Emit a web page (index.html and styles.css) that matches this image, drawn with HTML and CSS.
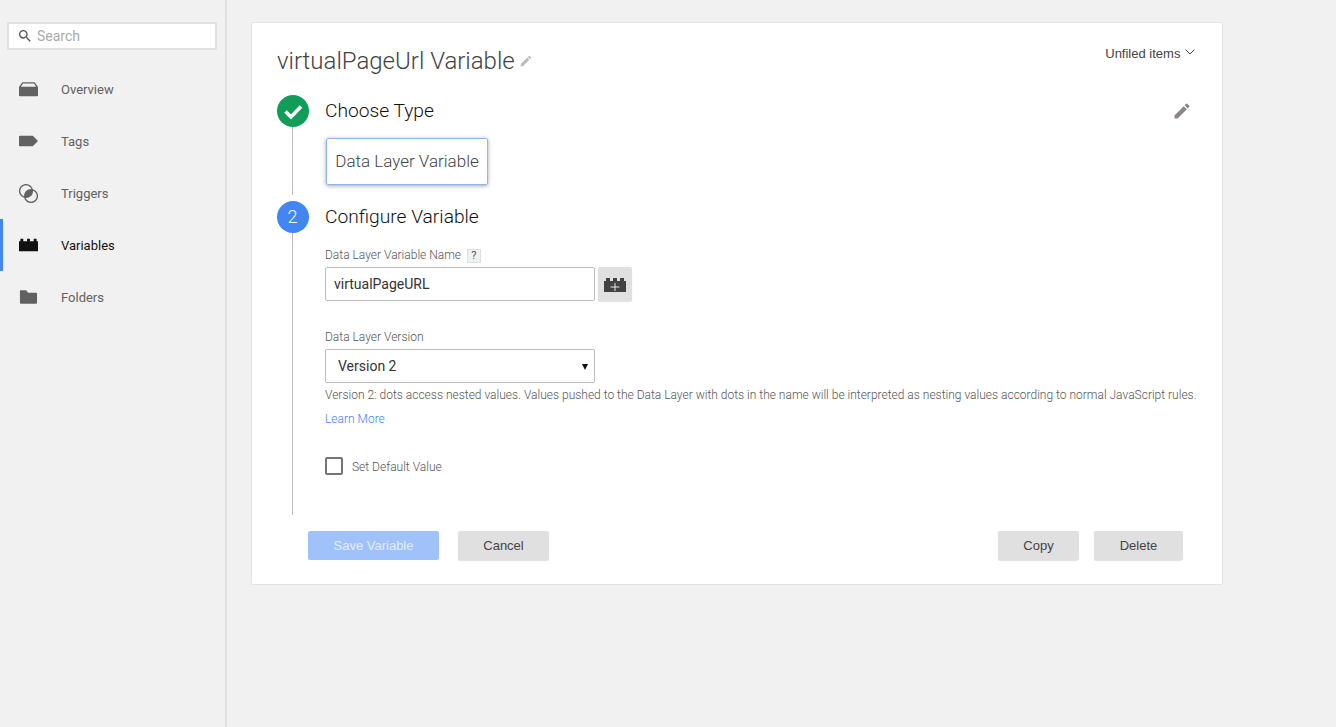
FILE: index.html
```html
<!DOCTYPE html>
<html lang="en">
<head>
  <meta charset="UTF-8" />
  <meta name="viewport" content="width=device-width, initial-scale=1.0" />
  <title>virtualPageUrl Variable</title>
  <link rel="stylesheet" href="styles.css">
</head>
<body>
  <aside class="sidebar">
    <div class="search">
      <svg class="search-icon" viewBox="0 0 24 24" width="16" height="16"><path d="M15.5 14h-.79l-.28-.27A6.471 6.471 0 0 0 16 9.500 6.500 6.500 0 1 0 9.500 16c1.610 0 3.090-.59 4.230-1.570l.27.28v.79l5 4.990L20.490 19l-4.990-5zm-6 0C7.010 14 5 11.990 5 9.500S7.010 5 9.500 5 14 7.010 14 9.500 11.990 14 9.500 14z"/></svg>
      <input type="text" class="search-input" placeholder="Search" />
    </div>
    <nav class="nav">
      <a class="nav-item">
        <svg viewBox="0 0 20 16" width="20" height="16"><path d="M3.500 1h13L20 6v8.500a1 1 0 0 1-1 1H1a1 1 0 0 1-1-1V6zM4.200 2.300 2 5.500h16l-2.200-3.200z" fill-rule="evenodd"/></svg>
        <span>Overview</span>
      </a>
      <a class="nav-item">
        <svg viewBox="0 0 20 16" width="20" height="16"><path d="M1 2.500h13.500L20 8l-5.500 5.500H1a1 1 0 0 1-1-1v-9a1 1 0 0 1 1-1z"/></svg>
        <span>Tags</span>
      </a>
      <a class="nav-item">
        <svg viewBox="0 0 19 19" width="19" height="19"><circle cx="7" cy="7" r="6.400" fill="none" stroke="currentColor" stroke-width="1.300"/><circle cx="12" cy="12" r="6.400" fill="none" stroke="currentColor" stroke-width="1.300"/><path d="M13.270 5.730A6.400 6.400 0 0 1 5.730 13.270 6.400 6.400 0 0 1 13.270 5.730z"/></svg>
        <span>Triggers</span>
      </a>
      <a class="nav-item active">
        <svg viewBox="0 0 20 16" width="20" height="16"><path d="M0 4h1.500V1.500h3V4h4V1.500h3V4h4V1.500h3V4H20v10.500H0z"/></svg>
        <span>Variables</span>
      </a>
      <a class="nav-item">
        <svg viewBox="0 0 20 16" width="20" height="16"><path d="M1.500 1h6l2 2.500H18a1 1 0 0 1 1 1V14a1 1 0 0 1-1 1H2a1 1 0 0 1-1-1V1.500z"/></svg>
        <span>Folders</span>
      </a>
    </nav>
  </aside>

  <main class="content">
    <section class="card">
      <header class="card-head">
        <h1 class="title">virtualPageUrl Variable
          <svg class="title-edit" viewBox="0 0 24 24" width="14" height="14"><path d="M3 17.250V21h3.750L17.810 9.940l-3.750-3.750zM20.710 7.040a1 1 0 0 0 0-1.410l-2.340-2.340a1 1 0 0 0-1.410 0l-1.830 1.830 3.750 3.750z"/></svg>
        </h1>
        <div class="folder-pick">Unfiled items
          <svg viewBox="0 0 10 6" width="10" height="6"><path d="M.5.500 5 5 9.500.500" fill="none" stroke="currentColor"/></svg>
        </div>
      </header>

      <div class="step step-one">
        <div class="rail">
          <div class="badge badge-done">
            <svg viewBox="0 0 24 24" width="24" height="24"><path d="M4.500 12.500 10 18 20 7.500" fill="none" stroke="#fff" stroke-width="3.600"/></svg>
          </div>
          <div class="rail-line"></div>
        </div>
        <div class="step-body">
          <div class="step-head">
            <h2>Choose Type</h2>
            <svg class="step-edit" viewBox="0 0 24 24" width="20" height="20"><path d="M3 17.250V21h3.750L17.810 9.940l-3.750-3.750zM20.710 7.040a1 1 0 0 0 0-1.410l-2.340-2.340a1 1 0 0 0-1.410 0l-1.830 1.830 3.750 3.750z"/></svg>
          </div>
          <div class="type-box">Data Layer Variable</div>
        </div>
      </div>

      <div class="step step-two">
        <div class="rail">
          <div class="badge badge-num">2</div>
          <div class="rail-line"></div>
        </div>
        <div class="step-body">
          <div class="step-head">
            <h2>Configure Variable</h2>
          </div>
          <div class="field-label name-label">Data Layer Variable Name <span class="help">?</span></div>
          <div class="input-row">
            <input type="text" class="text-input" value="virtualPageURL" />
            <button type="button" class="var-btn">
              <svg viewBox="0 0 22 14" width="22" height="14"><path d="M0 3h2V0h4v3h3V0h4v3h3V0h4v3h2v11H0z" fill="#424242"/><path d="M10.500 5h1v3.500H15.500v1h-4V13h-1V9.500h-4v-1h4z" fill="#e8e8e8"/></svg>
            </button>
          </div>
          <div class="field-label version-label">Data Layer Version</div>
          <div class="select-wrap">
            <select class="select">
              <option>Version 2</option>
              <option>Version 1</option>
            </select>
          </div>
          <p class="hint">Version 2: dots access nested values. Values pushed to the Data Layer with dots in the name will be interpreted as nesting values according to normal JavaScript rules.</p>
          <a class="learn">Learn More</a>
          <label class="check">
            <input type="checkbox" />
            <span>Set Default Value</span>
          </label>
        </div>
      </div>

      <footer class="actions">
        <button type="button" class="btn btn-save">Save Variable</button>
        <button type="button" class="btn btn-cancel">Cancel</button>
        <div class="actions-right">
          <button type="button" class="btn btn-copy">Copy</button>
          <button type="button" class="btn btn-delete">Delete</button>
        </div>
      </footer>
    </section>
  </main>
</body>
</html>
```

FILE: styles.css
```css
body {
  font-family: 'Roboto', sans-serif;
  background-color: #f1f1f1;
  color: #333;
  margin: 0;
  padding: 0;
  display: flex;
  height: 727px;
  overflow: hidden;
}

/* Sidebar */
.sidebar {
  width: 225px;
  flex-shrink: 0;
  border-right: 2px solid #e0e0e0;
  padding-top: 22px;
}

.search {
  display: flex;
  align-items: center;
  box-sizing: border-box;
  width: 210px;
  height: 28px;
  margin-left: 7px;
  padding-left: 8px;
  background-color: white;
  border: 2px solid #e0e0e0;
}

.search-icon {
  fill: #555;
  flex-shrink: 0;
}

.search-input {
  border: none;
  outline: none;
  padding: 0;
  margin-left: 4px;
  width: 150px;
  font-family: 'Roboto', sans-serif;
  font-size: 14px;
  background: none;
}

.search-input::placeholder {
  color: #aaa;
  opacity: 1;
}

.nav {
  margin-top: 13px;
}

.nav-item {
  display: flex;
  align-items: center;
  height: 52px;
  box-sizing: border-box;
  padding-left: 19px;
  font-size: 13px;
  color: #616161;
  fill: #616161;
}

.nav-item svg {
  width: 19px;
  flex-shrink: 0;
  margin-right: 23px;
}

.nav-item.active {
  border-left: 3px solid #4285f4;
  padding-left: 16px;
  color: #111;
  fill: #111;
}

/* Card */
.content {
  flex: 1;
  padding: 22px 113px 0 24px;
}

.card {
  box-sizing: border-box;
  width: 972px;
  height: 563px;
  background-color: white;
  border: 1px solid #e3e3e3;
  border-radius: 2px;
  padding: 0 26px 0 25px;
}

.card-head {
  display: flex;
  justify-content: space-between;
  height: 72px;
}

.title {
  margin: 22px 0 0;
  font-size: 24px;
  line-height: 32px;
  font-weight: 300;
  color: #424242;
}

.title-edit {
  fill: #bdbdbd;
  vertical-align: 1px;
  margin-left: -2px;
}

.folder-pick {
  margin-top: 23px;
  margin-right: 1px;
  font-family: 'Liberation Sans', sans-serif;
  font-size: 13px;
  line-height: 16px;
  color: #444;
}

.folder-pick svg {
  margin-left: 1px;
  vertical-align: 3px;
}

/* Steps */
.step {
  display: grid;
  grid-template-columns: 32px 1fr;
  column-gap: 16px;
}

.step-one {
  height: 106px;
}

.step-two {
  height: 314px;
}

.rail {
  display: flex;
  flex-direction: column;
  align-items: center;
}

.rail-line {
  width: 1px;
  flex: 1;
  margin-right: 1px;
  background-color: #bdbdbd;
}

.step-one .rail-line {
  margin-bottom: 6px;
}

.badge {
  width: 32px;
  height: 32px;
  border-radius: 50%;
  flex-shrink: 0;
  display: flex;
  align-items: center;
  justify-content: center;
  color: white;
}

.badge-done {
  background-color: #0f9d58;
}

.badge-num {
  box-sizing: border-box;
  padding: 0 1px 1px 0;
  background-color: #4285f4;
  font-size: 18px;
  font-weight: 300;
}

.step-head {
  display: flex;
  justify-content: space-between;
  align-items: center;
  height: 32px;
}

.step-head h2 {
  margin: 0 0 2px;
  font-size: 19.200px;
  font-weight: 300;
  color: #111;
}

.step-edit {
  fill: #8d8580;
  margin-right: 4px;
}

.type-box {
  box-sizing: border-box;
  width: 162px;
  height: 47px;
  margin: 11px 0 0 1px;
  line-height: 45px;
  text-align: center;
  font-size: 17px;
  font-weight: 300;
  color: #444;
  border: 1px solid #8ab4f8;
  border-radius: 2px;
  box-shadow: 0 1px 4px rgba(0, 0, 0, 0.35);
}

/* Form fields */
.field-label {
  font-size: 12px;
  line-height: 16px;
  font-weight: 300;
  color: #555;
}

.name-label {
  margin-top: 14px;
}

.help {
  display: inline-block;
  box-sizing: border-box;
  width: 14px;
  height: 14px;
  margin-left: 3px;
  line-height: 12px;
  text-align: center;
  font-size: 11px;
  font-weight: 400;
  background-color: #f1f1f1;
  border: 1px solid #e0e0e0;
}

.input-row {
  display: flex;
  margin-top: 4px;
}

.text-input {
  box-sizing: border-box;
  width: 270px;
  height: 34px;
  padding: 0 8px;
  font-family: 'Roboto', sans-serif;
  font-size: 14px;
  color: #333;
  border: 1px solid #bdbdbd;
  border-radius: 2px;
  outline: none;
}

.var-btn {
  display: flex;
  align-items: center;
  justify-content: center;
  width: 34px;
  height: 34px;
  margin-left: 3px;
  padding: 2px 0 0;
  background-color: #e0e0e0;
  border: none;
  border-radius: 2px;
  box-shadow: 0 1px 1px rgba(0, 0, 0, 0.12);
}

.version-label {
  margin-top: 28px;
}

.select-wrap {
  position: relative;
  width: 270px;
  margin-top: 4px;
}

.select-wrap::after {
  content: '';
  position: absolute;
  right: 7px;
  top: 15px;
  border-left: 3px solid transparent;
  border-right: 3px solid transparent;
  border-top: 6px solid #111;
}

.select {
  display: block;
  box-sizing: border-box;
  width: 100%;
  height: 34px;
  padding: 0 12px;
  appearance: none;
  background-color: white;
  font-family: 'Roboto', sans-serif;
  font-size: 14px;
  color: #333;
  border: 1px solid #bdbdbd;
  border-radius: 2px;
  outline: none;
}

.hint {
  margin: 3px 0 0;
  font-size: 12px;
  line-height: 18px;
  font-weight: 300;
  color: #555;
  white-space: nowrap;
}

.learn {
  display: block;
  margin-top: 6px;
  font-size: 12px;
  line-height: 18px;
  font-weight: 300;
  color: #4285f4;
}

.check {
  display: flex;
  align-items: center;
  margin-top: 29px;
  font-size: 12px;
  font-weight: 300;
  color: #555;
}

.check span {
  padding-top: 1px;
}

.check input {
  appearance: none;
  box-sizing: border-box;
  width: 18px;
  height: 18px;
  margin: 0 9px 0 0;
  background-color: white;
  border: 2px solid #757575;
  border-radius: 2px;
}

/* Buttons */
.actions {
  display: flex;
  margin: 16px 13px 0 31px;
}

.actions-right {
  display: flex;
  margin-left: auto;
  column-gap: 15px;
}

.btn {
  height: 29px;
  padding: 0;
  font-family: 'Liberation Sans', sans-serif;
  font-size: 13px;
  color: #444;
  background-color: #e0e0e0;
  border: none;
  border-radius: 2px;
  box-shadow: 0 1px 1px rgba(0, 0, 0, 0.12);
}

.btn-save {
  width: 131px;
  margin-right: 19px;
  color: #e3edff;
  background-color: #a0c2fa;
  box-shadow: none;
}

.btn-cancel {
  width: 91px;
}

.btn-copy {
  width: 81px;
}

.btn-delete {
  width: 89px;
}
```
